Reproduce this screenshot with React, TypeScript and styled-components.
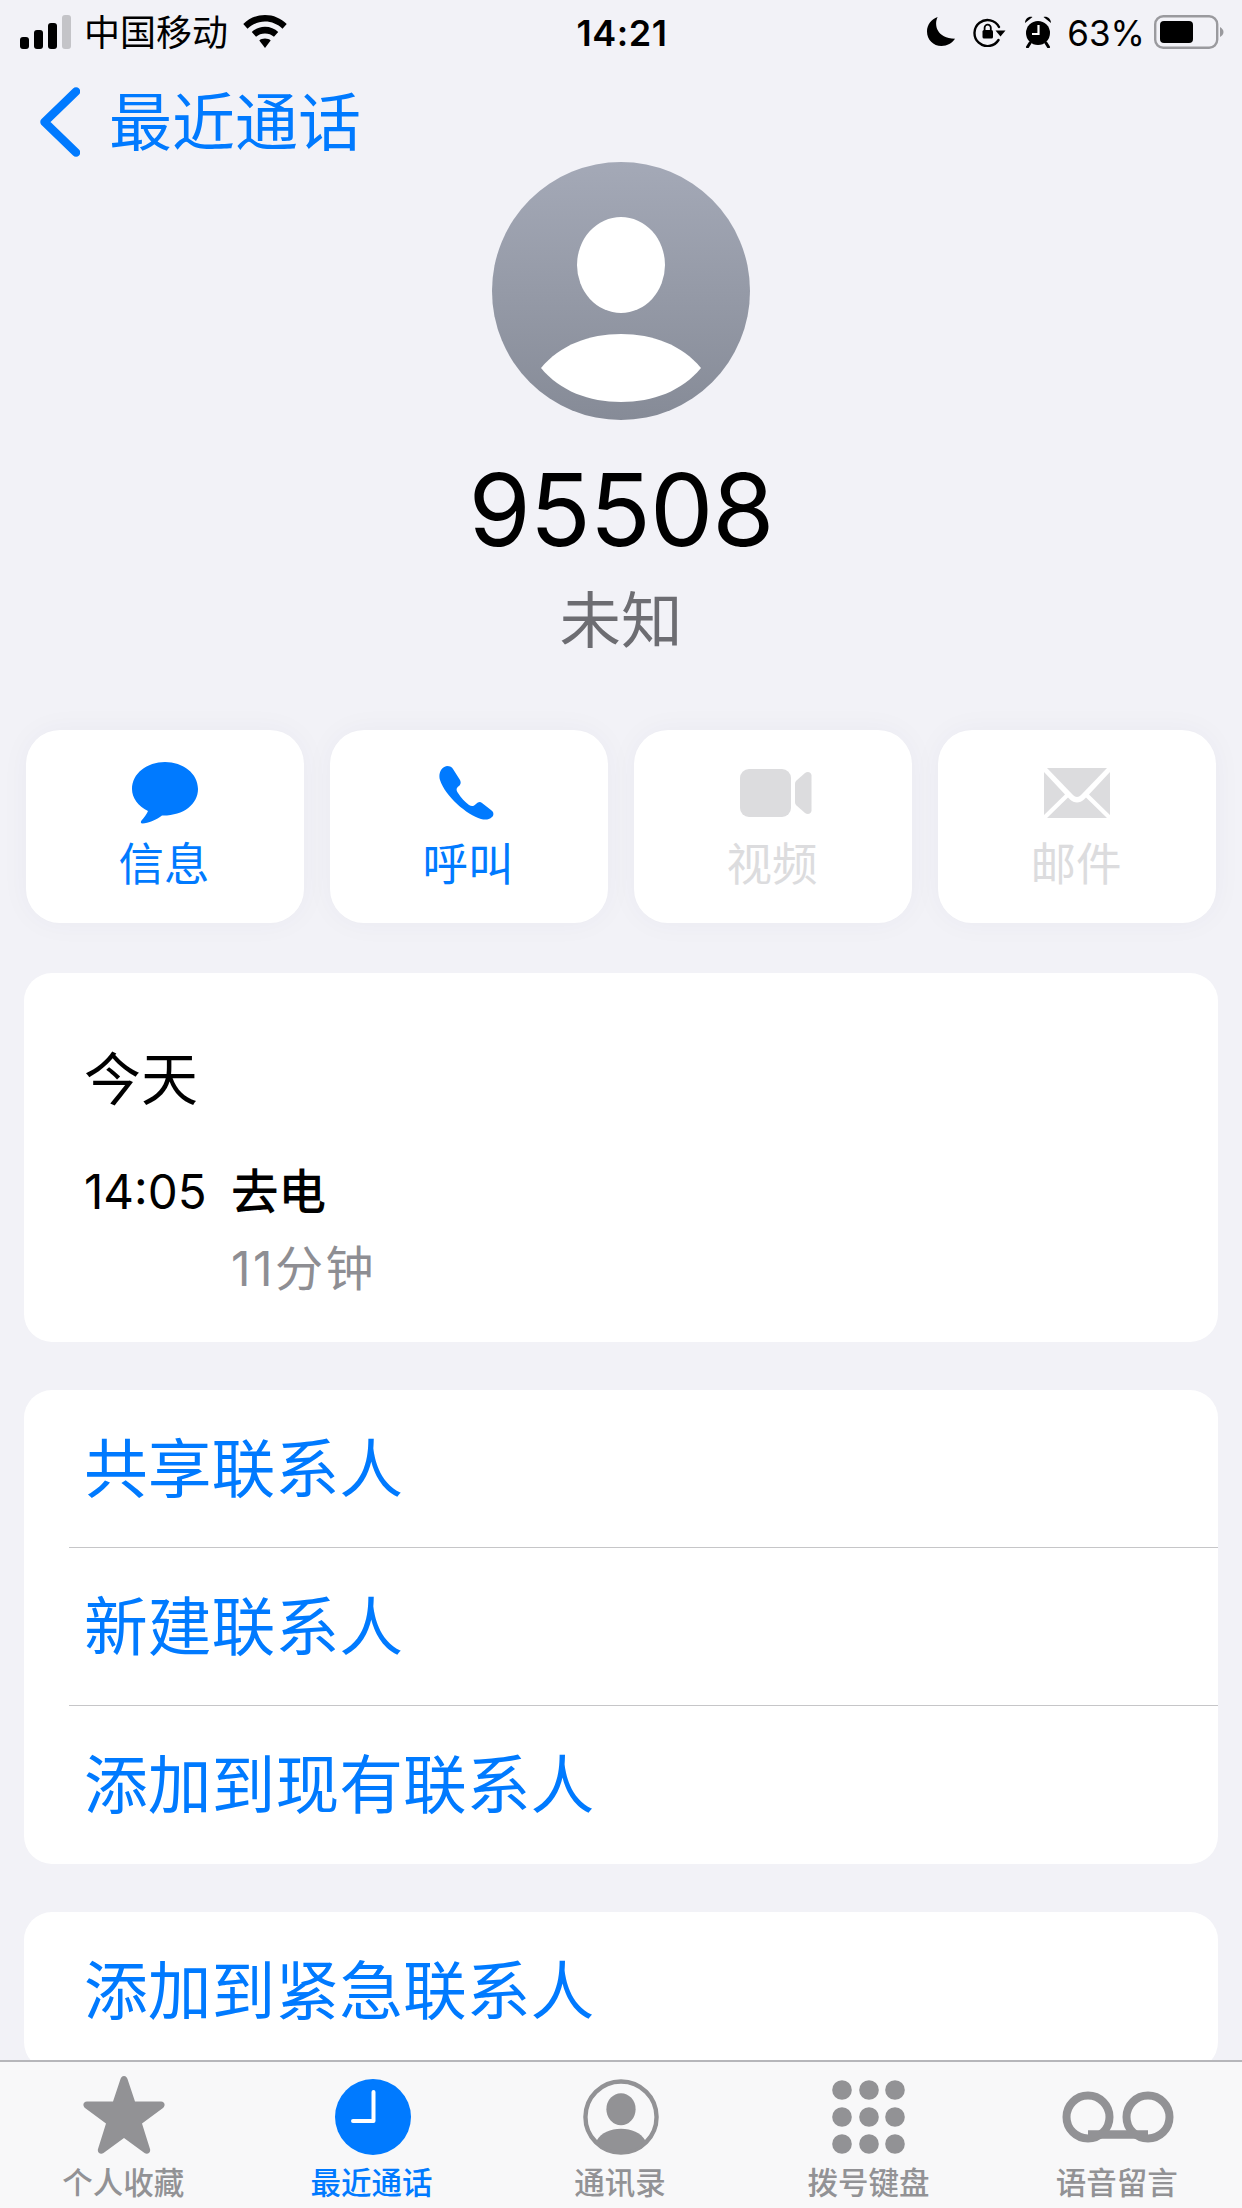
import React from "react"
import styled, { createGlobalStyle } from "styled-components"

const BLUE = "#007aff"
const CJK = `Inter, "Noto Sans CJK SC", sans-serif`

const GlobalStyle = createGlobalStyle`
  html, body {
    margin: 0;
    padding: 0;
    background: #f2f2f7;
  }
  * {
    box-sizing: border-box;
  }
`

const Page = styled.div`
  width: 1242px;
  height: 2208px;
  display: flex;
  flex-direction: column;
  overflow: hidden;
  background: #f2f2f7;
  font-family: ${CJK};
`

const Content = styled.div`
  flex: 1;
  min-height: 0;
  overflow: hidden;
`

const StatusBar = styled.div`
  height: 60px;
  padding: 0 18px 0 20px;
  display: grid;
  grid-template-columns: 1fr auto 1fr;
  align-items: center;
  color: #000;
`

const StatusGroup = styled.div<{ $end?: boolean }>`
  display: flex;
  align-items: center;
  justify-content: ${(p) => (p.$end ? "flex-end" : "flex-start")};
`

const Carrier = styled.span`
  font-size: 36px;
  line-height: 60px;
  margin: 0 13px 0 12px;
  padding-top: 3px;
`

const Clock = styled.span`
  font-size: 36px;
  font-weight: 600;
  letter-spacing: 0.5px;
  padding-top: 2px;
`

const Percent = styled.span`
  font-size: 35px;
  margin: 0 9px 0 15px;
  padding-top: 2px;
`

const Spaced = styled.span<{ $left: number }>`
  display: flex;
  margin-left: ${(p) => p.$left}px;
`

const Nav = styled.div`
  height: 102px;
  padding: 22px 0 0 40px;
  display: flex;
  align-items: center;
  gap: 29px;
  color: ${BLUE};
`

const NavTitle = styled.span`
  font-size: 63px;
  line-height: 70px;
`

const Header = styled.div`
  display: flex;
  flex-direction: column;
  align-items: center;
`

const Number = styled.div`
  font-size: 100.5px;
  line-height: 120px;
  margin-top: 30px;
  color: #000;
  letter-spacing: -1px;
`

const Sub = styled.div`
  font-size: 61.5px;
  line-height: 70px;
  margin-top: 16px;
  margin-bottom: -1px;
  color: #6d6d72;
`

const Actions = styled.div`
  display: grid;
  grid-template-columns: repeat(4, 278px);
  gap: 26px;
  padding: 0 26px;
  margin-top: 75px;
`

const Action = styled.div<{ $disabled?: boolean }>`
  height: 193px;
  border-radius: 34px;
  padding-top: 32px;
  background: #fff;
  box-shadow: 0 0 30px rgba(60, 60, 90, 0.04);
  display: flex;
  flex-direction: column;
  align-items: center;
  color: ${(p) => (p.$disabled ? "#dcdcde" : BLUE)};
`

const ActionIcon = styled.div`
  height: 62px;
  display: flex;
  align-items: center;
`

const ActionLabel = styled.div`
  font-size: 45.5px;
  line-height: 50px;
  margin: 16px 2px 0 0;
`

const Card = styled.div<{ $top: number }>`
  margin: ${(p) => p.$top}px 24px 0;
  background: #fff;
  border-radius: 28px;
`

const CallInfo = styled.div`
  height: 369px;
  padding: 72px 60px 0;
`

const Day = styled.div`
  font-size: 57px;
  line-height: 70px;
  color: #000;
`

const CallRow = styled.div`
  display: grid;
  grid-template-columns: 147px auto;
  align-items: center;
  margin-top: 49px;
  font-size: 47.5px;
  line-height: 56px;
  color: #000;
`

const CallType = styled.span`
  font-weight: 500;
`

const Duration = styled.div`
  margin: 21px 0 0 147px;
  font-size: 48px;
  line-height: 56px;
  letter-spacing: 2.5px;
  color: #8e8e93;
`

const Row = styled.div<{ $line?: boolean }>`
  height: 158px;
  margin-left: 45px;
  padding: 0 0 10px 15px;
  display: flex;
  align-items: center;
  color: ${BLUE};
  font-size: 63.8px;
  border-bottom: ${(p) => (p.$line ? "1.5px solid #c6c6c8" : "none")};
`

const TabBar = styled.div`
  flex: none;
  height: 148px;
  display: grid;
  grid-template-columns: repeat(5, 1fr);
  background: #f8f8f9;
  border-top: 2px solid #b6b6ba;
`

const Tab = styled.div<{ $active?: boolean }>`
  display: flex;
  flex-direction: column;
  align-items: center;
  color: ${(p) => (p.$active ? BLUE : "#929295")};
`

const TabIcon = styled.div`
  height: 96px;
  display: flex;
  align-items: center;
  justify-content: center;
  padding-top: 14px;
`

const TabLabel = styled.div`
  font-size: 30.5px;
  line-height: 40px;
  font-weight: 500;
  margin: 5px 2px 0 0;
`

const Signal = () => (
  <svg width="52" height="34" viewBox="0 0 52 34">
    <rect x="0" y="22" width="9" height="12" rx="3" fill="#000" />
    <rect x="14" y="15" width="9" height="19" rx="3" fill="#000" />
    <rect x="28" y="8" width="9" height="26" rx="3" fill="#000" />
    <rect x="42" y="0" width="9" height="34" rx="3" fill="#c4c4c8" />
  </svg>
)

const Wifi = () => (
  <svg width="48" height="34" viewBox="0 0 48 36">
    <path d="M24 0C33 0 41 3.600 47 9.500L42.500 14.500C37.500 9.800 31 7 24 7S10.500 9.800 5.500 14.500L1 9.500C7 3.600 15 0 24 0Z" fill="#000" />
    <path d="M24 12.500C29.500 12.500 34.500 14.700 38 18L33.500 23C31 20.800 27.600 19.500 24 19.500S17 20.800 14.500 23L10 18C13.500 14.700 18.500 12.500 24 12.500Z" fill="#000" />
    <path d="M24 25C26.500 25 28.700 25.800 30 27L24 35L18 27C19.300 25.800 21.500 25 24 25Z" fill="#000" />
  </svg>
)

const Moon = () => (
  <svg width="29" height="29" viewBox="0 0 30 30">
    <path d="M11 0C7 8 10 22 29 22.500C26 27 21 30 15 30C6.500 30 0 23.500 0 15C0 8 4.500 2 11 0Z" fill="#000" />
  </svg>
)

const RotationLock = () => (
  <svg width="33" height="30" viewBox="0 0 33 30">
    <path d="M26 10A13 13 0 1 0 25.500 23" fill="none" stroke="#000" strokeWidth="2.400" strokeLinecap="round" />
    <path d="M22.500 13.500L32.500 13.500L27.500 19.500Z" fill="#000" />
    <rect x="9.500" y="13" width="10.500" height="8.500" rx="1.500" fill="#000" />
    <path d="M11.600 13.500V10.800A3.100 3.100 0 0 1 17.800 10.800V13.500" fill="none" stroke="#000" strokeWidth="1.800" />
  </svg>
)

const Alarm = () => (
  <svg width="28" height="32" viewBox="0 0 28 32">
    <circle cx="14" cy="17" r="12" fill="#000" />
    <path d="M1 7C1 3 4.500 0 8.500 1Z M27 7C27 3 23.500 0 19.500 1Z" fill="#000" />
    <path d="M6 27L3.500 31M22 27L24.500 31" stroke="#000" strokeWidth="3" strokeLinecap="round" />
    <path d="M14.500 9V18H8" fill="none" stroke="#fff" strokeWidth="2.200" />
  </svg>
)

const Battery = () => (
  <svg width="70" height="34" viewBox="0 0 70 34">
    <rect x="1.200" y="1.200" width="62" height="31.600" rx="8" fill="none" stroke="#9a9a9e" strokeWidth="2.400" />
    <rect x="6" y="6" width="33" height="22" rx="4" fill="#000" />
    <path d="M66 12C68 13 69.500 15 69.500 17S68 21 66 22Z" fill="#9a9a9e" />
  </svg>
)

const Chevron = () => (
  <svg width="40" height="70" viewBox="0 0 40 70">
    <path d="M36 4.500L4.500 35L36 65.500" fill="none" stroke={BLUE} strokeWidth="8.500" strokeLinecap="round" strokeLinejoin="round" />
  </svg>
)

const Avatar = () => (
  <svg width="258" height="258" viewBox="0 0 258 258">
    <defs>
      <linearGradient id="avatarFill" x1="0" y1="0" x2="0" y2="1">
        <stop offset="0" stopColor="#a4a9b7" />
        <stop offset="1" stopColor="#868b97" />
      </linearGradient>
    </defs>
    <circle cx="129" cy="129" r="129" fill="url(#avatarFill)" />
    <ellipse cx="129" cy="103" rx="44" ry="48" fill="#fff" />
    <path d="M49 206C68 183 97 172 129 172C161 172 190 183 209 206C190 229 161 240 129 240C97 240 68 229 49 206Z" fill="#fff" />
  </svg>
)

const MessageIcon = () => (
  <svg width="66" height="62" viewBox="0 0 66 62">
    <path d="M33 0C51 0 66 11.500 66 27C66 42.500 51 54 30 53.500C25 57.500 16 61.500 10.500 61.500C8.500 61.500 8.500 60 9.500 58.500C12 55.500 15 52 16 49C6 44 0 36 0 27C0 11.500 15 0 33 0Z" fill="currentColor" />
  </svg>
)

const PhoneIcon = () => (
  <svg width="60" height="54" viewBox="0 0 60 54">
    <path d="M8 0C11 0 13 1 14 3L21 14C22 16 22 18 20 20C17 22 17 24 19 27C22 32 26 36 30 39C33 41 35 40 37 38C39 36 41 35 43 37L52 44C55 46 55 49 53 51C50 54 46 54 42 53C28 49 6 30 1 14C-1 8 2 1 8 0Z" fill="currentColor" />
  </svg>
)

const VideoIcon = () => (
  <svg width="78" height="48" viewBox="-6 0 78 48">
    <rect x="0" y="0" width="51" height="48" rx="9" fill="currentColor" />
    <path d="M55 15C55 13.500 55.500 12.500 56.500 11.500L65 4C67.500 2 71.500 3 71.500 6.500V41.500C71.500 45 67.500 46 65 44L56.500 36.500C55.500 35.500 55 34.500 55 33Z" fill="currentColor" />
  </svg>
)

const MailIcon = () => (
  <svg width="66" height="50" viewBox="0 0 66 50">
    <path d="M3 0H63L37 27C34.500 29.500 31.500 29.500 29 27Z" fill="currentColor" />
    <path d="M0 4L21 26.500L0 47Z M66 4L45 26.500L66 47Z" fill="currentColor" />
    <path d="M24 29.500L26 31.500C30 35.500 36 35.500 40 31.500L42 29.500L63 50H3Z" fill="currentColor" />
  </svg>
)

const StarIcon = () => (
  <svg width="82" height="82" viewBox="0 0 82 82">
    <path d="M41 0C43 0 44 1.500 44.500 3L52 25.500H78C81.500 25.500 83 29.500 80 32L59 47.500L67 73C68 76.500 64.500 79 61.500 77L41 62L20.500 77C17.500 79 14 76.500 15 73L23 47.500L2 32C-1 29.500 0.500 25.500 4 25.500H30L37.500 3C38 1.500 39 0 41 0Z" fill="currentColor" />
  </svg>
)

const ClockIcon = () => (
  <svg width="76" height="76" viewBox="0 0 76 76">
    <circle cx="38" cy="38" r="38" fill="currentColor" />
    <path d="M38.500 13V42H18" fill="none" stroke="#fff" strokeWidth="4" strokeLinecap="round" strokeLinejoin="round" />
  </svg>
)

const ContactsIcon = () => (
  <svg width="76" height="76" viewBox="0 0 78 78">
    <circle cx="39" cy="39" r="36.500" fill="none" stroke="currentColor" strokeWidth="4.500" />
    <ellipse cx="39" cy="31" rx="15" ry="16.500" fill="currentColor" />
    <path d="M14 63C19 55 28 51 39 51S59 55 64 63C58 70 49 74 39 74S20 70 14 63Z" fill="currentColor" />
  </svg>
)

const KeypadIcon = () => (
  <svg width="74" height="74" viewBox="0 0 74 74">
    {[10, 37, 64].map((cy) =>
      [10, 37, 63].map((cx) => (
        <circle key={`${cx}-${cy}`} cx={cx} cy={cy} r="9.800" fill="currentColor" />
      ))
    )}
  </svg>
)

const VoicemailIcon = () => (
  <svg width="112" height="52" viewBox="0 0 112 52">
    <circle cx="26" cy="26" r="21.500" fill="none" stroke="currentColor" strokeWidth="8" />
    <circle cx="86" cy="26" r="21.500" fill="none" stroke="currentColor" strokeWidth="8" />
    <path d="M26 43.500H86" fill="none" stroke="currentColor" strokeWidth="8.500" />
  </svg>
)

const tabs = [
  { label: "个人收藏", icon: <StarIcon /> },
  { label: "最近通话", icon: <ClockIcon />, active: true },
  { label: "通讯录", icon: <ContactsIcon /> },
  { label: "拨号键盘", icon: <KeypadIcon /> },
  { label: "语音留言", icon: <VoicemailIcon /> },
]

const actions = [
  { label: "信息", icon: <MessageIcon /> },
  { label: "呼叫", icon: <PhoneIcon /> },
  { label: "视频", icon: <VideoIcon />, disabled: true },
  { label: "邮件", icon: <MailIcon />, disabled: true },
]

export default function App() {
  return (
    <Page>
      <GlobalStyle />
      <Content>
        <StatusBar>
          <StatusGroup>
            <Signal />
            <Carrier>中国移动</Carrier>
            <Wifi />
          </StatusGroup>
          <Clock>14:21</Clock>
          <StatusGroup $end>
            <Moon />
            <Spaced $left={17}><RotationLock /></Spaced>
            <Spaced $left={18}><Alarm /></Spaced>
            <Percent>63%</Percent>
            <Battery />
          </StatusGroup>
        </StatusBar>
        <Nav>
          <Chevron />
          <NavTitle>最近通话</NavTitle>
        </Nav>
        <Header>
          <Avatar />
          <Number>95508</Number>
          <Sub>未知</Sub>
        </Header>
        <Actions>
          {actions.map((a) => (
            <Action key={a.label} $disabled={a.disabled}>
              <ActionIcon>{a.icon}</ActionIcon>
              <ActionLabel>{a.label}</ActionLabel>
            </Action>
          ))}
        </Actions>
        <Card $top={50}>
          <CallInfo>
            <Day>今天</Day>
            <CallRow>
              <span>14:05</span>
              <CallType>去电</CallType>
            </CallRow>
            <Duration>11分钟</Duration>
          </CallInfo>
        </Card>
        <Card $top={48}>
          <Row $line>共享联系人</Row>
          <Row $line>新建联系人</Row>
          <Row>添加到现有联系人</Row>
        </Card>
        <Card $top={48}>
          <Row>添加到紧急联系人</Row>
        </Card>
      </Content>
      <TabBar>
        {tabs.map((t) => (
          <Tab key={t.label} $active={t.active}>
            <TabIcon>{t.icon}</TabIcon>
            <TabLabel>{t.label}</TabLabel>
          </Tab>
        ))}
      </TabBar>
    </Page>
  )
}
